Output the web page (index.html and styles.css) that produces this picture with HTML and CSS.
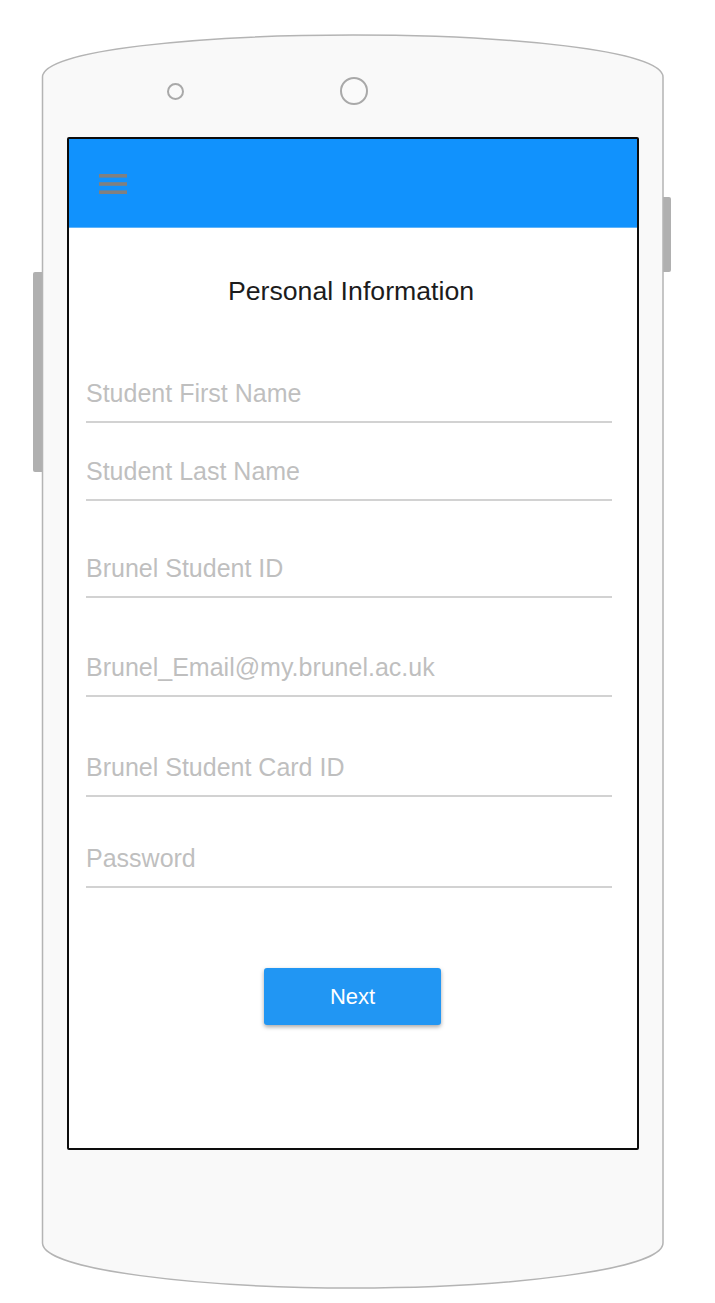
FILE: index.html
```html
<!DOCTYPE html>
<html lang="en">
<head>
<meta charset="utf-8">
<title>Personal Information</title>
<link rel="stylesheet" href="styles.css">
</head>
<body>
<div class="device">
  <div class="side-btn side-btn-left"></div>
  <div class="side-btn side-btn-right"></div>
  <svg class="frame" width="715" height="1303" viewBox="0 0 715 1303" aria-hidden="true">
    <path d="M42.5,77 C42.5,50 200,35 353,35 C506,35 663,50 663,77 L663,1243 C663,1270 506,1288 353,1288 C200,1288 42.5,1270 42.5,1243 Z" fill="#f9f9f9" stroke="#b4b4b4" stroke-width="1.5"/>
  </svg>
  <div class="sensors">
    <span class="cam cam-small"></span>
    <span class="cam cam-big"></span>
  </div>
  <div class="screen">
    <header class="appbar">
      <svg class="menu" width="28" height="20" viewBox="0 0 28 20" aria-hidden="true">
        <rect x="0" y="0" width="28" height="3.6" fill="#808080"/>
        <rect x="0" y="8.2" width="28" height="3.6" fill="#808080"/>
        <rect x="0" y="16.4" width="28" height="3.6" fill="#808080"/>
      </svg>
    </header>
    <h1 class="title">Personal Information</h1>
    <div class="form">
      <div class="field f1"><span class="ph">Student First Name</span></div>
      <div class="field f2"><span class="ph">Student Last Name</span></div>
      <div class="field f3"><span class="ph">Brunel Student ID</span></div>
      <div class="field f4"><span class="ph">Brunel_Email@my.brunel.ac.uk</span></div>
      <div class="field f5"><span class="ph">Brunel Student Card ID</span></div>
      <div class="field f6"><span class="ph">Password</span></div>
    </div>
    <button class="next">Next</button>
  </div>
</div>
</body>
</html>
```

FILE: styles.css
```css
html, body {
  margin: 0;
  padding: 0;
  background: #ffffff;
}

body {
  font-family: "Liberation Sans", Arial, sans-serif;
}

.device {
  position: relative;
  width: 715px;
  height: 1303px;
  overflow: hidden;
}

.frame {
  position: absolute;
  left: 0;
  top: 0;
}

.side-btn {
  position: absolute;
  background: #b0b0b0;
  border-radius: 2px 0 0 2px;
}

.side-btn-left {
  left: 33px;
  top: 272px;
  width: 10px;
  height: 200px;
}

.side-btn-right {
  left: 662px;
  top: 197px;
  width: 9px;
  height: 75px;
  border-radius: 0 2px 2px 0;
}

.sensors {
  position: relative;
  display: flex;
  align-items: center;
  height: 28px;
  padding-top: 77px;
  padding-left: 167px;
}

.cam {
  display: block;
  box-sizing: border-box;
  border: 2px solid #a9a9a9;
  border-radius: 50%;
  background: #fafafa;
}

.cam-small {
  width: 17px;
  height: 17px;
}

.cam-big {
  width: 28px;
  height: 28px;
  margin-left: 156px;
}

.screen {
  position: relative;
  box-sizing: border-box;
  width: 572px;
  height: 1013px;
  margin-left: 67px;
  margin-top: 32px;
  border: 2px solid #0d0d0d;
  border-radius: 2px;
  background: #ffffff;
}

.appbar {
  height: 89px;
  background: #1192fd;
  border-bottom: 1px solid #5fb4fb;
  box-sizing: border-box;
  padding-left: 30px;
  padding-top: 35px;
}

.menu {
  display: block;
}

.title {
  margin: 48px 0 0 0;
  text-align: center;
  font-weight: normal;
  font-size: 26.7px;
  line-height: 31px;
  color: #1c1c1c;
  padding-right: 4px;
}

.form {
  margin-left: 17px;
  width: 526px;
}

.field {
  box-sizing: border-box;
  height: 44px;
  padding-bottom: 13px;
  border-bottom: 2px solid #d2d2d2;
  font-size: 25px;
  line-height: 29px;
  color: #bfbfbf;
}

.f1 { margin-top: 72px; }
.f2 { margin-top: 34px; }
.f3 { margin-top: 53px; }
.f4 { margin-top: 55px; }
.f5 { margin-top: 56px; }
.f6 { margin-top: 47px; }

.ph {
  display: block;
  padding-top: 0;
}

.next {
  display: block;
  width: 177px;
  height: 57px;
  margin: 80px auto 0;
  position: relative;
  left: -0.5px;
  border: none;
  border-radius: 3px;
  background: #2196f3;
  color: #ffffff;
  font-family: "Liberation Sans", Arial, sans-serif;
  font-size: 22px;
  box-shadow: 0 2px 4px rgba(0, 0, 0, 0.35);
  padding: 0;
}
```
